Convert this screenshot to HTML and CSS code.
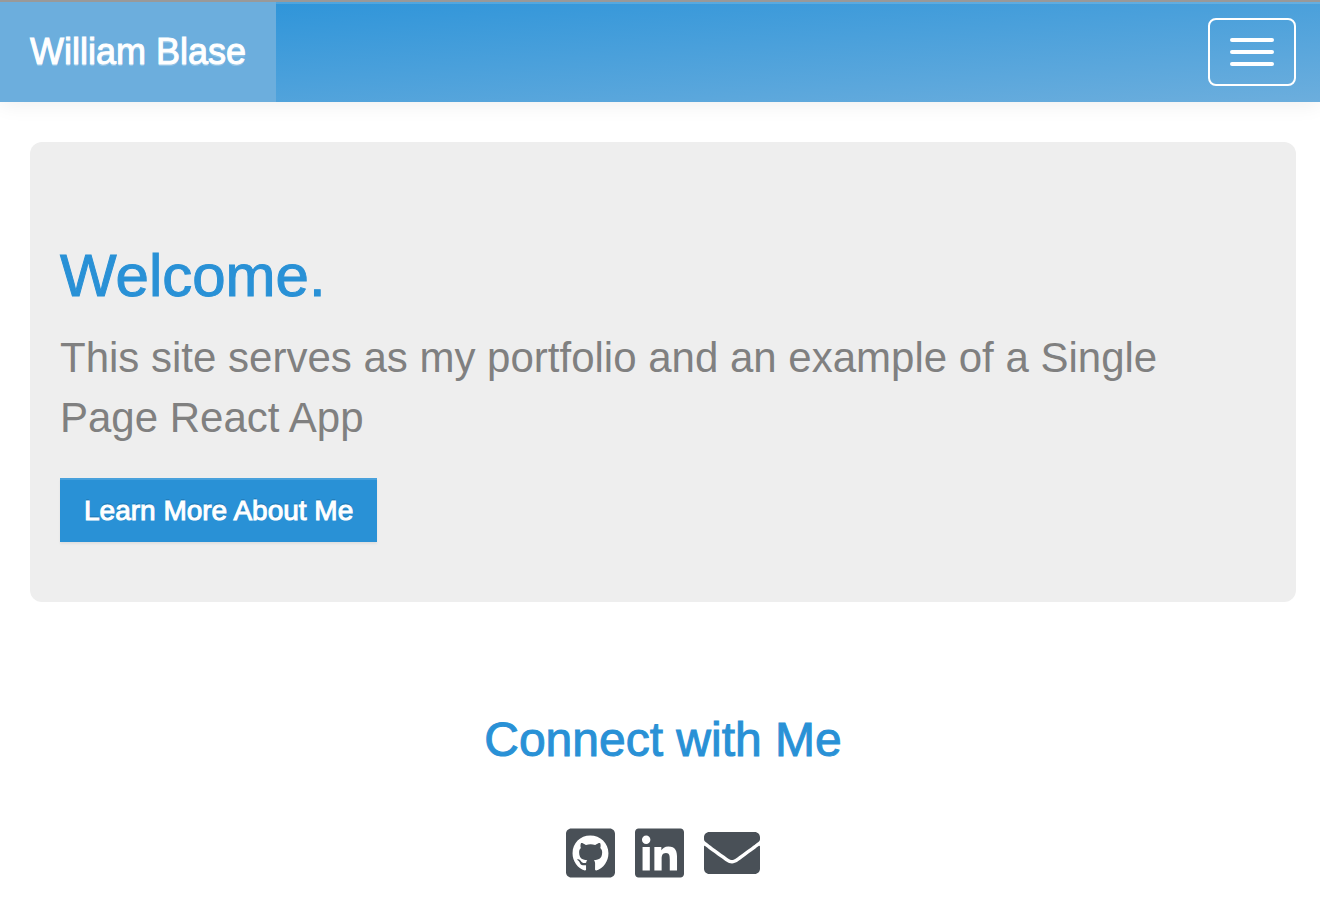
FILE: index.html
```html
<!DOCTYPE html>
<html lang="en">
<head>
<meta charset="utf-8">
<meta name="viewport" content="width=device-width, initial-scale=1">
<title>William Blase</title>
<link rel="stylesheet" href="styles.css">
</head>
<body>
<header class="navbar">
  <a class="brand" href="#">William Blase</a>
  <button class="toggle" type="button" aria-label="Toggle navigation">
    <span class="bar"></span>
    <span class="bar"></span>
    <span class="bar"></span>
  </button>
</header>
<main class="container">
  <section class="jumbotron">
    <h1 class="title">Welcome.</h1>
    <p class="lead">This site serves as my portfolio and an example of a Single Page React App</p>
    <a class="btn" href="#about">Learn More About Me</a>
  </section>
  <section class="connect">
    <h2 class="subtitle">Connect with Me</h2>
    <nav class="social" aria-label="Social links">
      <a class="social-link" href="#github" aria-label="GitHub"><svg class="icon" viewBox="0 0 448 512" aria-hidden="true"><path d="M400 32H48C21.5 32 0 53.5 0 80v352c0 26.5 21.5 48 48 48h352c26.5 0 48-21.5 48-48V80c0-26.5-21.5-48-48-48zM277.3 415.7c-8.4 1.5-11.5-3.7-11.5-8 0-5.4.2-33 .2-55.3 0-15.6-5.2-25.5-11.3-30.7 37-4.1 76-9.2 76-73.1 0-18.2-6.5-27.3-17.1-39 1.7-4.3 7.4-22-1.7-45-13.9-4.3-45.7 17.9-45.7 17.9-13.2-3.7-27.5-5.6-41.6-5.6-14.1 0-28.4 1.9-41.6 5.6 0 0-31.8-22.2-45.7-17.9-9.1 22.9-3.5 40.6-1.7 45-10.6 11.7-15.6 20.8-15.6 39 0 63.6 37.3 69 74.3 73.1-4.8 4.3-9.1 11.7-10.6 22.3-9.5 4.3-33.8 11.7-48.3-13.9-9.1-15.8-25.5-17.1-25.5-17.1-16.2-.2-1.1 10.2-1.1 10.2 10.8 5 18.4 24.2 18.4 24.2 9.7 29.7 56.1 19.7 56.1 19.7 0 13.9.2 36.5.2 40.6 0 4.3-3 9.5-11.5 8-66-22.1-112.2-84.9-112.2-158.3 0-91.8 70.2-161.5 162-161.5S388 165.6 388 257.4c.1 73.4-44.7 136.3-110.7 158.3z"/></svg></a>
      <a class="social-link" href="#linkedin" aria-label="LinkedIn"><svg class="icon" viewBox="0 0 448 512" aria-hidden="true"><path d="M416 32H31.9C14.3 32 0 46.5 0 64.3v383.4C0 465.5 14.3 480 31.9 480H416c17.6 0 32-14.5 32-32.3V64.3c0-17.8-14.4-32.3-32-32.3zM135.4 416H69V202.2h66.5V416zm-33.2-243c-21.3 0-38.5-17.3-38.5-38.5S80.9 96 102.2 96c21.2 0 38.5 17.3 38.5 38.5 0 21.3-17.2 38.5-38.5 38.5zm282.1 243h-66.4V312c0-24.8-.5-56.7-34.5-56.7-34.6 0-39.9 27-39.9 54.9V416h-66.4V202.2h63.7v29.2h.9c8.9-16.8 30.6-34.5 62.9-34.5 67.2 0 79.7 44.3 79.7 101.9V416z"/></svg></a>
      <a class="social-link" href="#email" aria-label="Email"><svg class="icon" viewBox="0 0 512 512" aria-hidden="true"><path d="M502.3 190.8c3.9-3.1 9.7-.2 9.7 4.7V400c0 26.5-21.5 48-48 48H48c-26.5 0-48-21.5-48-48V195.6c0-5 5.7-7.8 9.7-4.7 22.4 17.4 52.1 39.5 154.1 113.6 21.1 15.4 56.7 47.8 92.2 47.6 35.7.3 72-32.8 92.3-47.6 102-74.1 131.6-96.3 154-113.7zM256 320c23.2.4 56.6-29.2 73.4-41.4 132.7-96.3 142.8-104.7 173.4-128.7 5.8-4.5 9.2-11.5 9.2-18.9v-19c0-26.5-21.5-48-48-48H48c-26.5 0-48 21.5-48 48v19c0 7.4 3.4 14.3 9.2 18.9 30.6 23.9 40.7 32.4 173.4 128.7 16.8 12.2 50.2 41.8 73.4 41.4z"/></svg></a>
    </nav>
  </section>
</main>
</body>
</html>
```
FILE: styles.css
```css
* {
  box-sizing: border-box;
}

body {
  margin: 0;
  border-top: 2px solid #999;
  background: #fff;
  color: #808080;
  font-family: "Liberation Sans", Arial, sans-serif;
  font-size: 28px;
}

.navbar {
  display: flex;
  align-items: center;
  justify-content: space-between;
  min-height: 100px;
  padding-right: 24px;
  background: linear-gradient(to bottom right, #2892d9, #6caedd);
  box-shadow: inset 0 2px 0 rgba(255, 255, 255, 0.15), 0 2px 20px rgba(0, 0, 0, 0.07);
}

.brand {
  display: flex;
  align-items: center;
  align-self: stretch;
  padding: 0 30px;
  background: #6caedd;
  color: #fff;
  font-size: 36px;
  line-height: 40px;
  text-decoration: none;
  text-shadow: 0 2px 0 rgba(255, 255, 255, 0.25);
  -webkit-text-stroke: 1px #fff;
}

.toggle {
  display: flex;
  flex-direction: column;
  gap: 8px;
  padding: 18px 20px;
  border: 2px solid #fff;
  border-radius: 8px;
  background: transparent;
}

.bar {
  width: 44px;
  height: 4px;
  border-radius: 2px;
  background: #fff;
}

.container {
  padding: 40px 24px 40px 30px;
}

.jumbotron {
  padding: 100px 30px 60px;
  border-radius: 12px;
  background: #eee;
}

.title,
.subtitle {
  margin: 0;
  color: #2991d6;
  font-weight: 400;
  -webkit-text-stroke: 1px #2991d6;
}

.title {
  margin-bottom: 18px;
  font-size: 60px;
  line-height: 68px;
}

.lead {
  margin: 0 0 30px;
  font-size: 42px;
  line-height: 60px;
}

.btn {
  display: inline-block;
  padding: 13px 24px 11px;
  background: #2991d6;
  box-shadow: inset 0 2px 0 rgba(255, 255, 255, 0.15), 0 2px 2px rgba(0, 0, 0, 0.06);
  color: #fff;
  font-size: 28px;
  line-height: 40px;
  text-decoration: none;
  text-shadow: 0 -2px 0 rgba(0, 0, 0, 0.15);
  vertical-align: top;
  -webkit-text-stroke: 1px #fff;
}

.connect {
  padding-top: 110px;
  text-align: center;
}

.subtitle {
  font-size: 48px;
  line-height: 56px;
}

.social {
  display: flex;
  justify-content: center;
  gap: 20px;
  margin-top: 57px;
}

.social-link {
  display: flex;
  color: #495057;
}

.icon {
  height: 56px;
  fill: currentColor;
}
```
